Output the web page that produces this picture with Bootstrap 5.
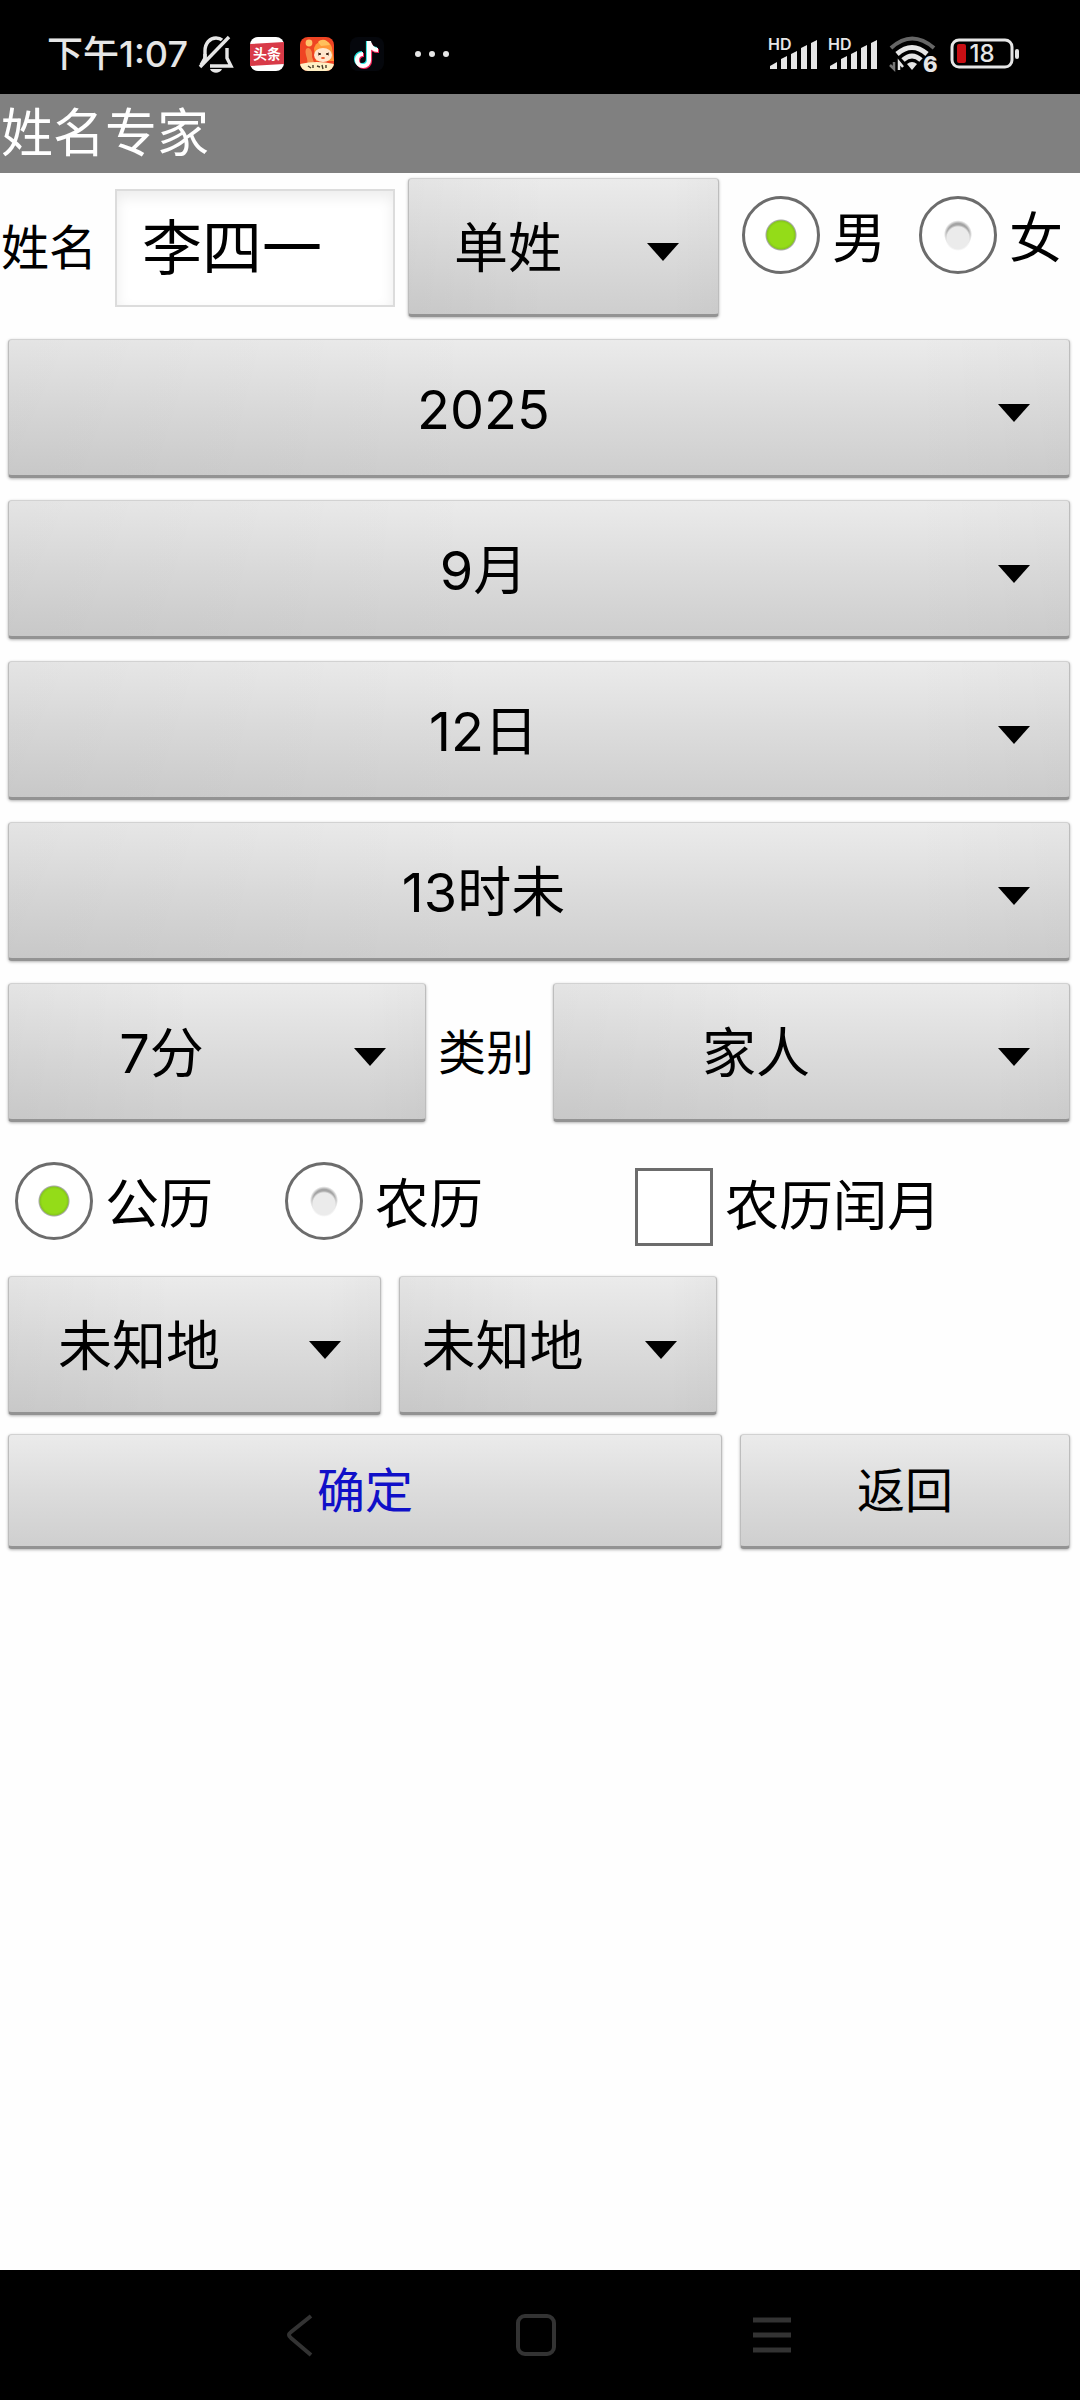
<!DOCTYPE html>
<html lang="zh-CN">
<head>
<meta charset="utf-8">
<meta name="viewport" content="width=device-width, initial-scale=1">
<title>姓名专家</title>
<link href="https://cdn.jsdelivr.net/npm/bootstrap@5.3.0/dist/css/bootstrap.min.css" rel="stylesheet">
<style>
  body { font-family: Inter, "Noto Sans CJK SC", sans-serif; font-size: 48px; line-height: 56px; color: #000; background: #fefefe; }
  svg { display: block; flex: none; }
  svg text { font-family: Inter, "Noto Sans CJK SC", sans-serif; }
  .status-bar { height: 94px; padding: 14px 60px 0 47px; background: #000; color: #e6e6e6; font-size: 36px; line-height: 40px; font-weight: 500; }
  .status-apps { gap: 16px; margin-left: 10px; }
  .status-signals { gap: 10px; }
  .app-title { background: #808080; color: #fff; font-size: 52px; line-height: 79px; padding-left: 1px; }
  .form-rows { padding: 5px 10px 0 8px; gap: 22px; }
  .grey-box {
    appearance: none; border: 1px solid #bdbdbd; border-top-color: #d2d2d2; border-bottom: 3px solid #939393;
    border-radius: 4px; box-shadow: 0 1px 3px rgba(0,0,0,.3); color: #000; background-color: #dcdcdc; min-width: 0;
  }
  .spinner-box {
    height: 139px; font-size: 54px; line-height: 60px; text-align: center; text-align-last: center; padding: 4px 111px 0 0;
    background-image: url("data:image/svg+xml,%3Csvg xmlns='http://www.w3.org/2000/svg' width='32' height='18'%3E%3Cpath d='M0 0H32L16 18Z'/%3E%3C/svg%3E"),
      linear-gradient(90deg, rgba(0,0,0,.03), rgba(0,0,0,0) 45%, rgba(0,0,0,0) 85%, rgba(0,0,0,.02)),
      linear-gradient(#ebebeb, #dcdcdc 50%, #cecece);
    background-repeat: no-repeat; background-position: right 39px top 64px, 0 0, 0 0;
  }
  .push-btn { height: 115px; font-size: 48px; line-height: 56px; padding: 0; background-image: linear-gradient(#ebebeb, #dcdcdc 50%, #cfcfcf); }
  .ok-btn { color: #1010c8; flex: 1 1 714px; }
  .back-btn { flex: 1 1 330px; }
  .name-label { margin-left: -8px; width: 115px; padding-left: 1px; }
  .name-input {
    flex: 1 1 280px; min-width: 0; height: 118px; padding: 0 0 8px 25px; font-size: 60px; color: #000;
    border: 2px solid #dcdcdc; border-radius: 0; background: #fff; box-shadow: inset 0 6px 14px rgba(0,0,0,.08);
  }
  .surname-box { flex: 1 1 311px; margin-left: 13px; }
  .minute-box { flex: 1 1 418px; }
  .kind-box { flex: 1 1 517px; }
  .kind-label { padding: 0 19px 0 12px; }
  .place-a { flex: 1 1 373px; }
  .place-b { flex: 1 1 318px; }
  .place-rest { flex: 1 1 335px; }
  .bottom-rows { gap: 19px; }
  .split-row { gap: 18px; }
  .choice { display: flex; align-items: center; gap: 12px; font-size: 54px; line-height: 60px; }
  .choice input { appearance: none; width: 78px; height: 78px; margin: 0; border: 3px solid #6c6c6c; background: #fff; flex: none; }
  .choice span { padding-top: 8px; }
  .choice input[type=radio] { border-radius: 50%; background: radial-gradient(circle at 50% 54%, #ebebeb 11px, rgba(255,255,255,0) 13px), radial-gradient(circle at 50% 49%, #a4a4a4 11px, #fff 14px); }
  .choice input[type=radio]:checked { background: radial-gradient(circle at 50% 50%, #94dc18 12px, #86c81c 14px, #a9a9a9 15px, #fff 16px); }
  .gender-group { align-self: flex-start; padding: 18px 7px 0 0; margin-left: 23px; gap: 33px; }
  .calendar-row { height: 110px; padding: 18px 0 0 7px; }
  .lunar-choice { margin-left: 72px; }
  .leap-choice { margin: 6px 0 0 152px; }
  .leap-choice span { padding-top: 0; }
  .nav-bar { height: 130px; background: #000; gap: 192px; padding-right: 8px; }
  .nav-bar button { background: none; border: 0; padding: 0; }
</style>
<script src="https://cdn.jsdelivr.net/npm/bootstrap@5.3.0/dist/js/bootstrap.bundle.min.js"></script>
</head>
<body class="d-flex flex-column min-vh-100">

<header>
  <div class="status-bar d-flex align-items-center">
    <span>下午1:07</span>
    <div class="status-apps d-flex align-items-center">
      <svg width="36" height="40" viewBox="0 0 36 40" fill="none" stroke="#e6e6e6" stroke-width="3.4">
        <path d="M7 25V17C7 9 12 4 18 4C20 4 22 4 24 6M29 14V24L33 32H12"/>
        <path d="M2 33L31 3"/><path d="M7 20V24L3 31"/>
        <path d="M12 35H24C22 40 14 40 12 35Z" fill="#e6e6e6" stroke="none"/>
      </svg>
      <svg width="34" height="34" viewBox="0 0 34 34">
        <rect width="34" height="34" rx="8" fill="#fff"/><path d="M0 7L34 5V27L0 29Z" fill="#d83a48"/>
        <text x="17" y="22" font-size="14" font-weight="700" text-anchor="middle" fill="#fff">头条</text>
      </svg>
      <svg width="34" height="34" viewBox="0 0 34 34">
        <clipPath id="appclip"><rect width="34" height="34" rx="8"/></clipPath>
        <g clip-path="url(#appclip)">
          <rect width="34" height="34" fill="#ef4423"/>
          <circle cx="9" cy="6" r="3.4" fill="#ffc46b"/><path d="M6 12C9 9 13 13 12 20L15 28H7C9 22 4 17 6 12Z" fill="#f58b4a"/>
          <path d="M14 12C15 3 30 1 32 11L34 24H16Z" fill="#ff9838"/>
          <path d="M18 5C22 1 28 3 30 8L21 9Z" fill="#ffc05c"/>
          <ellipse cx="23" cy="18" rx="9" ry="7" fill="#ffe6cd"/>
          <path d="M18 16l3 1-3 1M29 16l-3 1 3 1" stroke="#402010" fill="none"/>
          <ellipse cx="23" cy="21" rx="2" ry="1" fill="#e8562b"/>
          <path d="M0 27Q17 23 34 27V34H0Z" fill="#fff0c4"/>
          <path d="M8 29l3 2M13 28v3M17 29l3 1M22 28l1 4M26 28v3" stroke="#453a28" stroke-width="1.4"/>
        </g>
      </svg>
      <svg width="34" height="34" viewBox="0 0 34 34">
        <rect width="34" height="34" rx="8" fill="#05070c"/>
        <g fill="none" stroke-width="4.2">
          <path d="M18 4V22A6 6 0 1 1 12 16M18 5C19 10 23 12 27 12" stroke="#25e5e0"/>
          <path d="M20 6V24A6 6 0 1 1 14 18M20 7C21 12 25 14 29 14" stroke="#f5265a"/>
          <path d="M19 4V23A6 6 0 1 1 13 17M19 5C20 10 24 13 28 13" stroke="#fff"/>
        </g>
      </svg>
      <svg class="ms-2" width="42" height="8" viewBox="-6 0 42 8" fill="#e6e6e6"><circle cx="4" cy="4" r="3"/><circle cx="18" cy="4" r="3"/><circle cx="32" cy="4" r="3"/></svg>
    </div>
    <div class="status-signals d-flex align-items-center ms-auto">
      <svg width="50" height="46" viewBox="0 -6 50 46" fill="#e6e6e6">
        <text x="0" y="13" font-size="16" font-weight="600">HD</text>
        <path d="M2 32V29L9 25V32ZM13 32V22L19 19V32ZM23 32V17L29 14V32ZM33 32V11L39 8V32ZM43 32V6L49 3V32Z"/>
      </svg>
      <svg width="50" height="46" viewBox="0 -6 50 46" fill="#e6e6e6">
        <text x="0" y="13" font-size="16" font-weight="600">HD</text>
        <path d="M2 32V29L9 25V32ZM13 32V22L19 19V32ZM23 32V17L29 14V32ZM33 32V11L39 8V32ZM43 32V6L49 3V32Z"/>
      </svg>
      <svg width="52" height="52" viewBox="-1 -6 52 52" fill="none" stroke="#e6e6e6" stroke-width="5">
        <path d="M2 14Q23 -5 45 14" stroke="#666" stroke-width="4"/>
        <path d="M8 20Q23 7 38 20"/><path d="M14 26Q23 18 32 26"/>
        <path d="M18 30Q23 26 28 30L23 36Z" fill="#e6e6e6" stroke="none"/>
        <path d="M5 28V35L1 31" stroke="#777" stroke-width="2.5"/><path d="M10 36V28L14 33" stroke-width="2.5"/>
        <text x="34" y="38" font-size="22" font-weight="800" fill="#e6e6e6" stroke="#000" stroke-width="3" paint-order="stroke">6</text>
      </svg>
      <svg width="70" height="32" viewBox="0 0 70 32">
        <rect x="2" y="2" width="60" height="27" rx="7" fill="none" stroke="#e6e6e6" stroke-width="3"/>
        <rect x="7" y="6" width="9" height="19" rx="2" fill="#c90f14"/>
        <rect x="65" y="11" width="4" height="10" rx="2" fill="#e6e6e6"/>
        <text x="32" y="24" font-size="24" font-weight="500" fill="#e6e6e6" text-anchor="middle">18</text>
      </svg>
    </div>
  </div>
  <h1 class="app-title fw-normal mb-0">姓名专家</h1>
</header>

<main class="flex-grow-1">
  <form class="form-rows d-flex flex-column">
    <div class="d-flex align-items-center">
      <label class="name-label" for="name">姓名</label>
      <input class="name-input" id="name" type="text" value="李四一">
      <select class="grey-box spinner-box surname-box" aria-label="姓氏"><option>单姓</option></select>
      <div class="gender-group d-flex">
        <label class="choice"><input type="radio" name="gender" checked><span>男</span></label>
        <label class="choice"><input type="radio" name="gender"><span>女</span></label>
      </div>
    </div>
    <select class="grey-box spinner-box w-100" aria-label="年"><option>2025</option></select>
    <select class="grey-box spinner-box w-100" aria-label="月"><option>9月</option></select>
    <select class="grey-box spinner-box w-100" aria-label="日"><option>12日</option></select>
    <select class="grey-box spinner-box w-100" aria-label="时"><option>13时未</option></select>
    <div class="d-flex align-items-center">
      <select class="grey-box spinner-box minute-box" aria-label="分"><option>7分</option></select>
      <label class="kind-label" for="kind">类别</label>
      <select class="grey-box spinner-box kind-box" id="kind"><option>家人</option></select>
    </div>
    <div class="calendar-row d-flex align-items-start">
      <label class="choice"><input type="radio" name="calendar" checked><span>公历</span></label>
      <label class="choice lunar-choice"><input type="radio" name="calendar"><span>农历</span></label>
      <label class="choice leap-choice"><input type="checkbox"><span>农历闰月</span></label>
    </div>
    <div class="bottom-rows d-flex flex-column">
      <div class="split-row d-flex">
        <select class="grey-box spinner-box place-a" aria-label="省"><option>未知地</option></select>
        <select class="grey-box spinner-box place-b" aria-label="市"><option>未知地</option></select>
        <div class="place-rest"></div>
      </div>
      <div class="split-row d-flex">
        <button class="grey-box push-btn ok-btn" type="button">确定</button>
        <button class="grey-box push-btn back-btn" type="button">返回</button>
      </div>
    </div>
  </form>
</main>

<footer class="nav-bar d-flex align-items-center justify-content-center">
  <button type="button" aria-label="后退"><svg width="44" height="44" viewBox="0 0 44 44" fill="none" stroke="#333" stroke-width="4"><path d="M33 3L13 19Q9 22 13 25L33 42"/></svg></button>
  <button type="button" aria-label="主页"><svg width="44" height="44" viewBox="0 0 44 44" fill="none" stroke="#333" stroke-width="4"><rect x="4" y="3" width="36" height="38" rx="7"/></svg></button>
  <button type="button" aria-label="菜单"><svg width="44" height="44" viewBox="0 0 44 44" fill="none" stroke="#333" stroke-width="5"><path d="M3 7H41M3 22H41M3 37H41"/></svg></button>
</footer>
</body>
</html>
